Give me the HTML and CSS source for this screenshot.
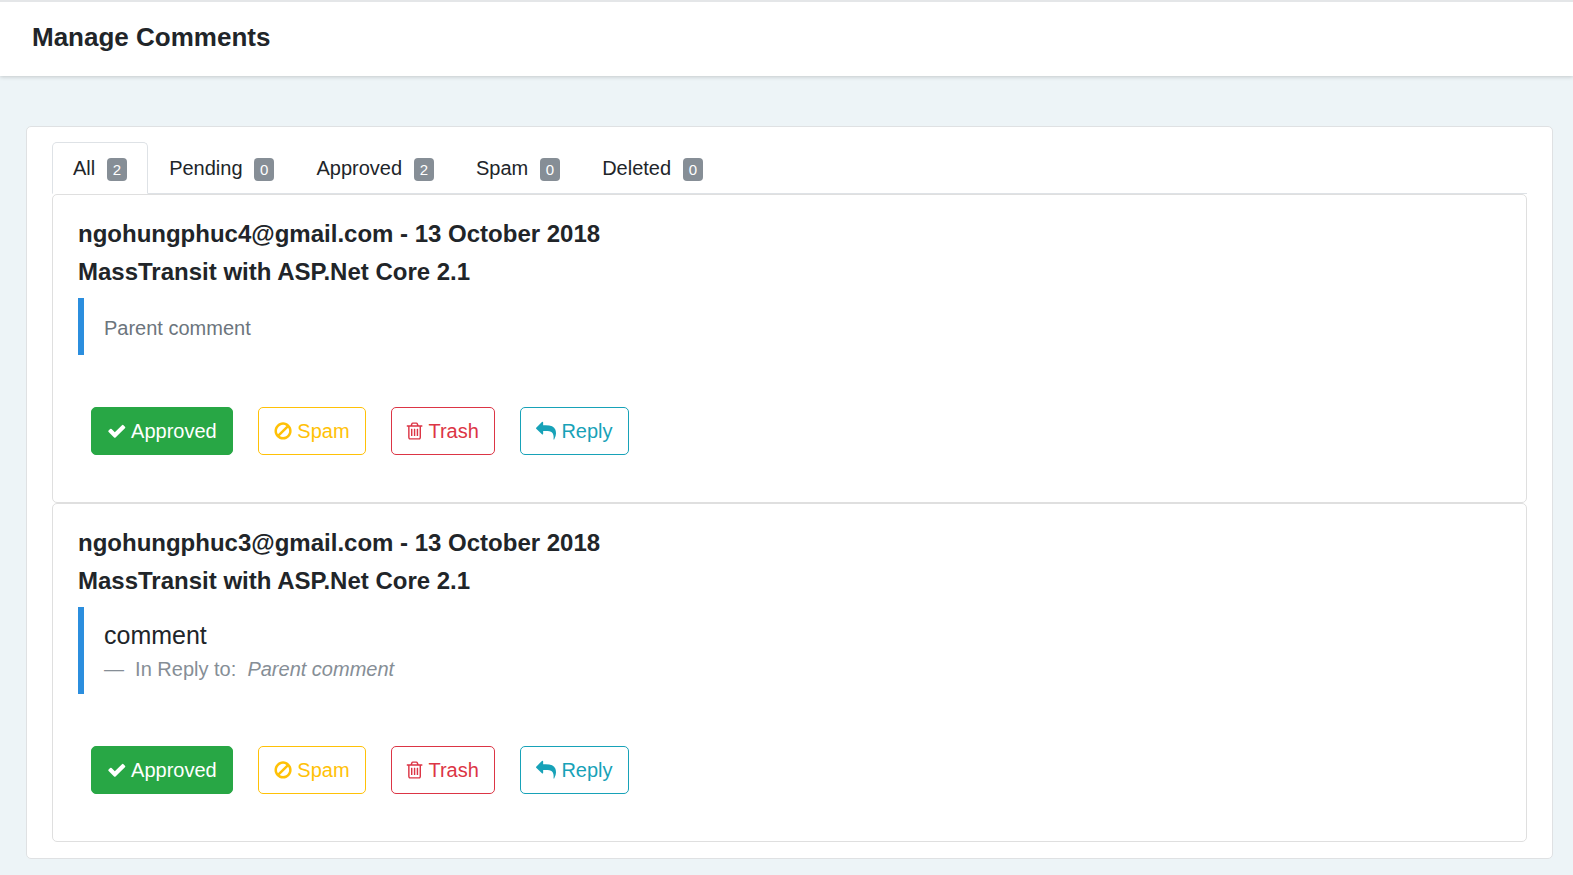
FILE: index.html
```html
<!DOCTYPE html>
<html lang="en">
<head>
<meta charset="utf-8">
<title>Manage Comments</title>
<link rel="stylesheet" href="styles.css">
</head>
<body>
<svg class="defs" width="0" height="0" aria-hidden="true">
  <symbol id="i-check" viewBox="0 0 1792 1792"><path d="M1671 566q0 40-28 68l-724 724-136 136q-28 28-68 28t-68-28l-136-136-362-362q-28-28-28-68t28-68l136-136q28-28 68-28t68 28l294 295 656-657q28-28 68-28t68 28l136 136q28 28 28 68z"/></symbol>
  <symbol id="i-ban" viewBox="128 0 1536 1792"><path d="M1440 893q0-161-87-295l-754 753q137 89 297 89 111 0 211.5-43.5t173.5-116.5 116-174.5 43-212.5zm-999 299l755-754q-135-91-300-91-148 0-273 73t-198 199-73 274q0 162 89 299zm1223-299q0 157-61 300t-163.5 246-245 164-298.5 61-298.5-61-245-164-163.5-246-61-300 61-299.5 163.5-245.5 245-164 298.5-61 298.5 61 245 164 163.5 245.5 61 299.5z"/></symbol>
  <symbol id="i-trash" viewBox="128 0 1408 1792" preserveAspectRatio="xMinYMid"><path d="M704 736v576q0 14-9 23t-23 9h-64q-14 0-23-9t-9-23v-576q0-14 9-23t23-9h64q14 0 23 9t9 23zm256 0v576q0 14-9 23t-23 9h-64q-14 0-23-9t-9-23v-576q0-14 9-23t23-9h64q14 0 23 9t9 23zm256 0v576q0 14-9 23t-23 9h-64q-14 0-23-9t-9-23v-576q0-14 9-23t23-9h64q14 0 23 9t9 23zm128 724v-948h-896v948q0 22 7 40.5t14.5 27 10.5 8.5h832q3 0 10.5-8.5t14.5-27 7-40.5zm-672-1076h448l-48-117q-7-9-17-11h-317q-10 2-17 11zm928 32v64q0 14-9 23t-23 9h-96v948q0 83-47 143.5t-113 60.5h-832q-66 0-113-58.5t-47-141.5v-952h-96q-14 0-23-9t-9-23v-64q0-14 9-23t23-9h309l70-167q15-37 54-63t79-26h320q40 0 79 26t54 63l70 167h309q14 0 23 9t9 23z"/></symbol>
  <symbol id="i-reply" viewBox="0 0 1792 1792"><path d="M1792 1120q0 166-127 451-3 7-10.5 24t-13.5 30-13 22q-12 17-28 17-15 0-23.5-10t-8.5-25q0-9 2.5-26.5t2.5-23.5q5-68 5-123 0-101-17.5-181t-48.5-138.5-80-101-105.5-69.5-133-42.5-154-21.5-175.5-6h-224v256q0 26-19 45t-45 19-45-19l-512-512q-19-19-19-45t19-45l512-512q19-19 45-19t45 19 19 45v256h224q713 0 875 403 53 134 53 333z"/></symbol>
</svg>

<header class="topbar"><h1 class="page-title">Manage Comments</h1></header>

<main class="card">
  <ul class="tabs">
    <li class="tab tab-active">All <span class="badge">2</span></li>
    <li class="tab">Pending <span class="badge">0</span></li>
    <li class="tab">Approved <span class="badge">2</span></li>
    <li class="tab">Spam <span class="badge">0</span></li>
    <li class="tab">Deleted <span class="badge">0</span></li>
  </ul>

  <article class="item">
    <h2 class="item-title">ngohungphuc4@gmail.com - 13 October 2018</h2>
    <h2 class="item-title">MassTransit with ASP.Net Core 2.1</h2>
    <blockquote class="quote">
      <p class="quote-muted">Parent comment</p>
    </blockquote>
    <div class="actions">
      <button class="btn btn-success"><svg class="icon icon-check"><use href="#i-check"/></svg> Approved</button>
      <button class="btn btn-warning"><svg class="icon icon-ban"><use href="#i-ban"/></svg> Spam</button>
      <button class="btn btn-danger"><svg class="icon icon-trash"><use href="#i-trash"/></svg> Trash</button>
      <button class="btn btn-info"><svg class="icon icon-reply"><use href="#i-reply"/></svg> Reply</button>
    </div>
  </article>

  <article class="item item-last">
    <h2 class="item-title">ngohungphuc3@gmail.com - 13 October 2018</h2>
    <h2 class="item-title">MassTransit with ASP.Net Core 2.1</h2>
    <blockquote class="quote">
      <p class="quote-text">comment</p>
      <footer class="quote-footer">&mdash; &nbsp;In Reply to: &nbsp;<cite>Parent comment</cite></footer>
    </blockquote>
    <div class="actions">
      <button class="btn btn-success"><svg class="icon icon-check"><use href="#i-check"/></svg> Approved</button>
      <button class="btn btn-warning"><svg class="icon icon-ban"><use href="#i-ban"/></svg> Spam</button>
      <button class="btn btn-danger"><svg class="icon icon-trash"><use href="#i-trash"/></svg> Trash</button>
      <button class="btn btn-info"><svg class="icon icon-reply"><use href="#i-reply"/></svg> Reply</button>
    </div>
  </article>
</main>
</body>
</html>
```
FILE: styles.css
```css
* { box-sizing: border-box; }
html, body { margin: 0; padding: 0; }
body {
  height: 875px;
  overflow: hidden;
  background: #edf4f7;
  color: #212529;
  font-family: "Liberation Sans", Arial, sans-serif;
  font-size: 20px;
  line-height: 1.5;
}
.defs { display: block; height: 0; }
.topbar {
  height: 76px;
  padding: 11px 32px 0;
  background: #fff;
  border-top: 2px solid #e4e6e8;
  box-shadow: 0 1px 4px rgba(0, 0, 0, .18);
}
.page-title {
  margin: 0;
  font-size: 26px;
  line-height: 1.9;
  font-weight: 700;
}
.card {
  margin: 50px 20px 0 26px;
  padding: 15px 25px 16px;
  background: #fff;
  border: 1px solid #dfe1e3;
  border-radius: 5px;
}
.tabs {
  display: flex;
  margin: 0;
  padding: 0;
  list-style: none;
  border-bottom: 1px solid #dee2e6;
}
.tab {
  padding: 10px 20px;
  margin-bottom: -1px;
  border: 1px solid transparent;
  border-radius: 5px 5px 0 0;
  white-space: nowrap;
}
.tab-active {
  background: #fff;
  border-color: #dee2e6 #dee2e6 #fff;
}
.badge {
  display: inline-block;
  margin-left: 6px;
  padding: 4px 6px;
  background: #868e96;
  color: #fff;
  font-size: 15px;
  line-height: 1;
  border-radius: 4px;
  vertical-align: baseline;
}
.item {
  padding: 20px 25px 0;
  border: 1px solid #dfdfdf;
  border-radius: 5px;
  height: 309px;
}
.item-last { height: 339px; }
.item-title {
  margin: 0;
  font-size: 24px;
  line-height: 38px;
  font-weight: 700;
}
.quote {
  margin: 7px 0 0;
  padding: 0 0 0 20px;
  border-left: 6px solid #2b8ede;
}
.quote p { margin: 0; }
.quote-muted {
  padding: 15px 0 12px;
  color: #6c757d;
}
.quote-text {
  padding-top: 12px;
  font-size: 25px;
  line-height: 32px;
}
.quote-footer {
  padding-top: 1px;
  padding-bottom: 8px;
  color: #868e96;
  line-height: 34px;
}
.quote-footer cite { font-style: italic; }
.actions {
  display: flex;
  gap: 25px;
  margin: 52px 0 0 13px;
}
.btn {
  height: 48px;
  padding: 0 15px;
  background: #fff;
  border: 1px solid;
  border-radius: 5px;
  font-family: inherit;
  font-size: 20px;
  line-height: 30px;
  white-space: nowrap;
}
.icon {
  display: inline-block;
  height: 20px;
  vertical-align: -3px;
  fill: currentColor;
}
.icon-check { width: 19.6px; }
.icon-ban { width: 18.1px; }
.icon-trash { width: 17.7px; margin-left: -1px; }
.icon-reply { width: 20px; }
.btn-success { background: #28a745; border-color: #28a745; color: #fff; }
.btn-warning { border-color: #ffc107; color: #ffc107; }
.btn-danger { border-color: #dc3545; color: #dc3545; }
.btn-info { border-color: #17a2b8; color: #17a2b8; }
```
